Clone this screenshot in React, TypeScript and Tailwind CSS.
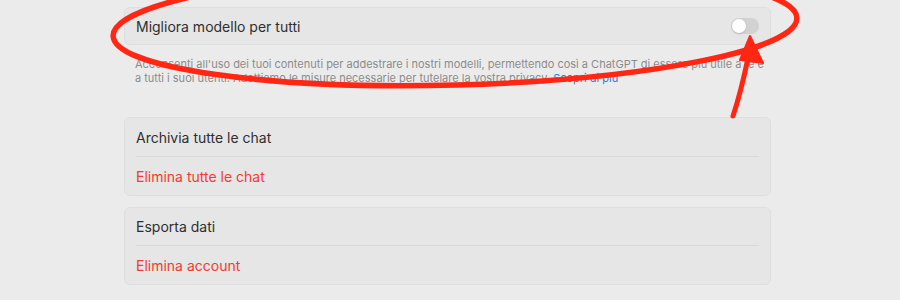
export default function App() {
  return (
    <div
      className="relative w-[900px] h-[300px] overflow-hidden bg-[#ebebeb]"
      style={{ fontFamily: "Inter, 'Noto Sans', sans-serif" }}
    >
      <div className="ml-[124px] w-[647px] pt-[7px] flex flex-col">
        {/* toggle row */}
        <div className="h-[38px] rounded-md border border-[#dedede] bg-[#e6e6e6] px-[11px] flex items-center justify-between">
          <span className="text-[14px] text-[#2f2f2f]">Migliora modello per tutti</span>
          <div className="w-[28px] h-[16px] rounded-full bg-[#d2d2d2] p-[1px] flex items-center">
            <div className="w-[14px] h-[14px] rounded-full bg-white shadow-sm" />
          </div>
        </div>

        <p className="mt-[12px] px-[11px] whitespace-nowrap text-[11px] leading-[14px] text-[#8c8c8c]">
          Acconsenti all'uso dei tuoi contenuti per addestrare i nostri modelli, permettendo così a ChatGPT di essere più utile a te e
          <br />
          a tutti i suoi utenti. Adottiamo le misure necessarie per tutelare la vostra privacy.{" "}
          <span className="text-[#2b7be0]">Scopri di più</span>
        </p>

        <div className="mt-[32px] rounded-md border border-[#dedede] bg-[#e6e6e6] px-[11px] flex flex-col">
          <div className="h-[38px] flex items-center text-[14px] text-[#2f2f2f]">Archivia tutte le chat</div>
          <div className="h-px bg-[#d9d9d9]" />
          <div className="h-[38px] flex items-center text-[14px] text-[#f23b30]">Elimina tutte le chat</div>
        </div>

        <div className="mt-[11px] rounded-md border border-[#dedede] bg-[#e6e6e6] px-[11px] flex flex-col">
          <div className="h-[37px] flex items-center text-[14px] text-[#2f2f2f]">Esporta dati</div>
          <div className="h-px bg-[#d9d9d9]" />
          <div className="h-[38px] flex items-center text-[14px] text-[#f23b30]">Elimina account</div>
        </div>
      </div>

      {/* red annotation */}
      <svg className="absolute inset-0 pointer-events-none" width="900" height="300" viewBox="0 0 900 300">
        <ellipse cx="455" cy="27" rx="342" ry="58" fill="none" stroke="#ff2614" strokeWidth="5.5" transform="rotate(-1.5 455 27)" />
        <path d="M733 116 Q741 92 748 58" fill="none" stroke="#ff2614" strokeWidth="5" strokeLinecap="round" />
        <path d="M750 36 L740 60 L763 63 Z" fill="#ff2614" stroke="#ff2614" strokeWidth="2" strokeLinejoin="round" />
      </svg>
    </div>
  );
}
